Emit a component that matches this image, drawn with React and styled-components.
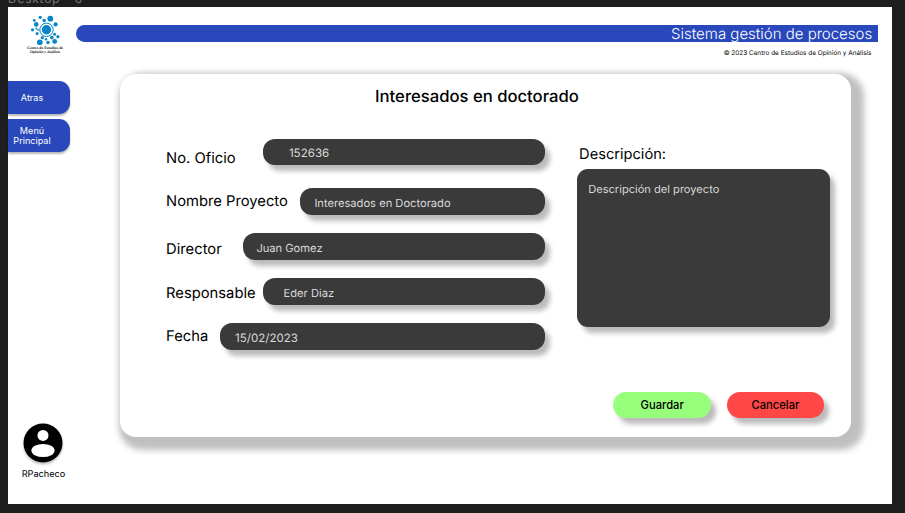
import React from 'react';
import styled, { createGlobalStyle } from 'styled-components';

const GlobalStyle = createGlobalStyle`
  * { box-sizing: border-box; }
  body {
    margin: 0;
    background: #1e1e1e;
    font-family: Inter, "Liberation Sans", sans-serif;
    color: #000;
    text-rendering: geometricPrecision;
    overflow: hidden;
  }
`;

const Canvas = styled.div`
  width: 905px;
  height: 513px;
  padding-left: 8px;
  overflow: hidden;
  background: #1e1e1e;
`;

const FrameLabel = styled.div`
  display: flex;
  align-items: flex-end;
  height: 7px;
  padding-bottom: 1px;
  overflow: hidden;
  font-size: 12px;
  line-height: 15px;
  letter-spacing: 0.75px;
  white-space: pre;
  color: #777;
`;

const Artboard = styled.main`
  display: flex;
  flex-direction: column;
  width: 883.6px;
  height: 496.7px;
  background: #fff;
`;

const Header = styled.header`
  display: flex;
  height: 66.5px;
`;

const Logo = styled.div`
  display: flex;
  flex-direction: column;
  align-items: center;
  width: 68px;
  padding: 7.5px 0 0 6px;
`;

const LogoMark = styled.svg`
  width: 31px;
  height: 30px;
  margin-left: 1px;
`;

const LogoText = styled.div`
  margin-top: 1.2px;
  font: 700 3.85px/4.4px "Liberation Serif", serif;
  text-align: center;
  white-space: nowrap;
  color: #222;
`;

const Banner = styled.div`
  display: flex;
  flex-direction: column;
  width: 802px;
  padding-top: 17.7px;
`;

const TitleBar = styled.h1`
  display: flex;
  justify-content: flex-end;
  align-items: center;
  height: 17.3px;
  margin: 0;
  padding: 1px 5.8px 0 0;
  border-radius: 9px 0 0 9px;
  background: #2948bb;
  color: #fff;
  font-size: 15px;
  font-weight: 300;
  line-height: 17px;
`;

const Copyright = styled.div`
  padding: 6.6px 6.5px 0 0;
  text-align: right;
  font-size: 6.42px;
  line-height: 9px;
`;

const Body = styled.div`
  display: flex;
  flex: 1;
`;

const Sidebar = styled.aside`
  display: flex;
  flex-direction: column;
  width: 111.7px;
  padding-top: 7.6px;
`;

const NavButton = styled.button`
  display: flex;
  justify-content: center;
  align-items: center;
  width: 62px;
  height: 33px;
  margin: 0 0 5.2px;
  padding: 0 14px 0 0;
  border: 0;
  border-radius: 0 11px 11px 0;
  background: #2948bb;
  box-shadow: 0 2px 2px rgba(0, 0, 0, 0.28);
  color: #fff;
  font: 400 9.1px/9.6px Inter, "Liberation Sans", sans-serif;
`;

const User = styled.div`
  display: flex;
  flex-direction: column;
  align-items: center;
  width: 71px;
  margin: auto 0 23.2px;
  font-size: 9.2px;
  line-height: 12px;
`;

const Avatar = styled.svg`
  width: 40px;
  height: 40px;
  margin: 0 1px 5.2px 0;
  filter: drop-shadow(0 2px 1px rgba(0, 0, 0, 0.25));
`;

const Card = styled.section`
  width: 731.5px;
  height: 363.5px;
  padding-top: 13px;
  border-radius: 16px;
  background: #fff;
  box-shadow: 6px 6px 6px 7px rgba(0, 0, 0, 0.25);
`;

const CardTitle = styled.h2`
  margin: 0;
  padding-right: 17px;
  text-align: center;
  font-size: 16.65px;
  font-weight: 500;
  line-height: 21px;
`;

const FormArea = styled.div`
  display: flex;
  gap: 32.3px;
  height: 317px;
  padding-left: 46.4px;
`;

const Fields = styled.div`
  width: 378.8px;
  padding-top: 31.3px;
`;

const Row = styled.div`
  display: flex;
  height: 26.4px;
  margin-bottom: ${({ $gap }) => $gap}px;
`;

const Label = styled.label`
  width: ${({ $width }) => $width}px;
  padding-top: ${({ $top }) => $top}px;
  font-size: 14.75px;
  line-height: 18px;
  white-space: nowrap;
`;

const Value = styled.div`
  flex: 1;
  height: 26.4px;
  padding-left: ${({ $inset }) => $inset}px;
  border-radius: 12px;
  background: #3a3a3a;
  box-shadow: 5px 6px 5px rgba(0, 0, 0, 0.27);
  color: #d9d9d9;
  font-size: ${({ $size = 11.15 }) => $size}px;
  line-height: ${({ $line = 30 }) => $line}px;
`;

const Details = styled.div`
  display: flex;
  flex-direction: column;
  width: 252.7px;
  padding-top: 37.7px;
`;

const DetailsLabel = styled.div`
  padding-left: 1.9px;
  font-size: 14.65px;
  line-height: 18px;
`;

const Description = styled.div`
  height: 158px;
  margin-top: 6.3px;
  padding: 12.6px 11px;
  border-radius: 11px;
  background: #3a3a3a;
  box-shadow: 5px 6px 5px rgba(0, 0, 0, 0.27);
  color: #d9d9d9;
  font-size: 11.1px;
  line-height: 15px;
`;

const Actions = styled.div`
  display: flex;
  justify-content: flex-end;
  gap: 15.5px;
  margin-top: 64.5px;
  padding-right: 5.5px;
`;

const ActionButton = styled.button`
  width: 97.8px;
  height: 26.4px;
  padding: 0;
  border: 0;
  border-radius: 13px;
  background: ${({ $color }) => $color};
  box-shadow: 5px 6px 5px rgba(0, 0, 0, 0.27);
  color: #000;
  font: 500 11.2px/14px Inter, "Liberation Sans", sans-serif;
`;

const dots = [
  [10.2, 2.3, 1.6], [20.3, 3.7, 2.9], [4.3, 5.4, 1.4], [14.2, 5.5, 1.7],
  [6.2, 9.4, 2.3], [25.6, 9.4, 2.1], [2.5, 14.8, 1.6], [6.4, 13.6, 1], [8.1, 15, 0.9],
  [7.1, 18.5, 1.5], [24.6, 19.3, 1.5], [27.9, 21.7, 1.6], [12.3, 22.7, 1.6],
  [21.8, 22.6, 1.8], [16, 24.2, 1.2], [9.8, 27.4, 2.8], [18, 27.5, 1.7], [24.7, 26.4, 2.4],
];

const fields = [
  { label: 'No. Oficio', value: '152636', width: 97, top: 9.8, inset: 25.8, size: 11.6, line: 29, gap: 23.2 },
  { label: 'Nombre Proyecto', value: 'Interesados en Doctorado', width: 134, top: 3.2, inset: 14.3, gap: 18.6 },
  { label: 'Director', value: 'Juan Gomez', width: 77, top: 6.8, inset: 13.3, gap: 18.6 },
  { label: 'Responsable', value: 'Eder Diaz', width: 97, top: 5.5, inset: 20.5, gap: 18.6 },
  { label: 'Fecha', value: '15/02/2023', width: 54, top: 4, inset: 15, size: 11.55, gap: 0 },
];

export default function App() {
  return (
    <Canvas>
      <GlobalStyle />
      <FrameLabel>Desktop - 6</FrameLabel>
      <Artboard>
        <Header>
          <Logo>
            <LogoMark viewBox="0 0 31 30" fill="#0785c9">
              {dots.map(([x, y, r]) => <circle key={`${x}-${y}`} cx={x} cy={y} r={r} />)}
              <circle cx="16.5" cy="14.8" r="4.7" />
              <circle cx="16.5" cy="14.8" r="6.7" fill="none" stroke="#0785c9" strokeWidth="1" />
            </LogoMark>
            <LogoText>Centro de Estudios de<br />Opinión y Análisis</LogoText>
          </Logo>
          <Banner>
            <TitleBar>Sistema gestión de procesos</TitleBar>
            <Copyright>© 2023 Centro de Estudios de Opinión y Análisis</Copyright>
          </Banner>
        </Header>
        <Body>
          <Sidebar>
            <NavButton>Atras</NavButton>
            <NavButton>Menú<br />Principal</NavButton>
            <User>
              <Avatar viewBox="0 0 40 40">
                <circle cx="20" cy="20" r="19.5" />
                <circle cx="20" cy="12.4" r="5.5" fill="#fff" />
                <ellipse cx="20" cy="27.5" rx="11.6" ry="6.6" fill="#fff" />
              </Avatar>
              RPacheco
            </User>
          </Sidebar>
          <Card>
            <CardTitle>Interesados en doctorado</CardTitle>
            <FormArea>
              <Fields>
                {fields.map((f) => (
                  <Row key={f.label} $gap={f.gap}>
                    <Label $width={f.width} $top={f.top}>{f.label}</Label>
                    <Value $inset={f.inset} $size={f.size} $line={f.line}>{f.value}</Value>
                  </Row>
                ))}
              </Fields>
              <Details>
                <DetailsLabel>Descripción:</DetailsLabel>
                <Description>Descripción del proyecto</Description>
                <Actions>
                  <ActionButton $color="#98ff7d">Guardar</ActionButton>
                  <ActionButton $color="#ff4747">Cancelar</ActionButton>
                </Actions>
              </Details>
            </FormArea>
          </Card>
        </Body>
      </Artboard>
    </Canvas>
  );
}
